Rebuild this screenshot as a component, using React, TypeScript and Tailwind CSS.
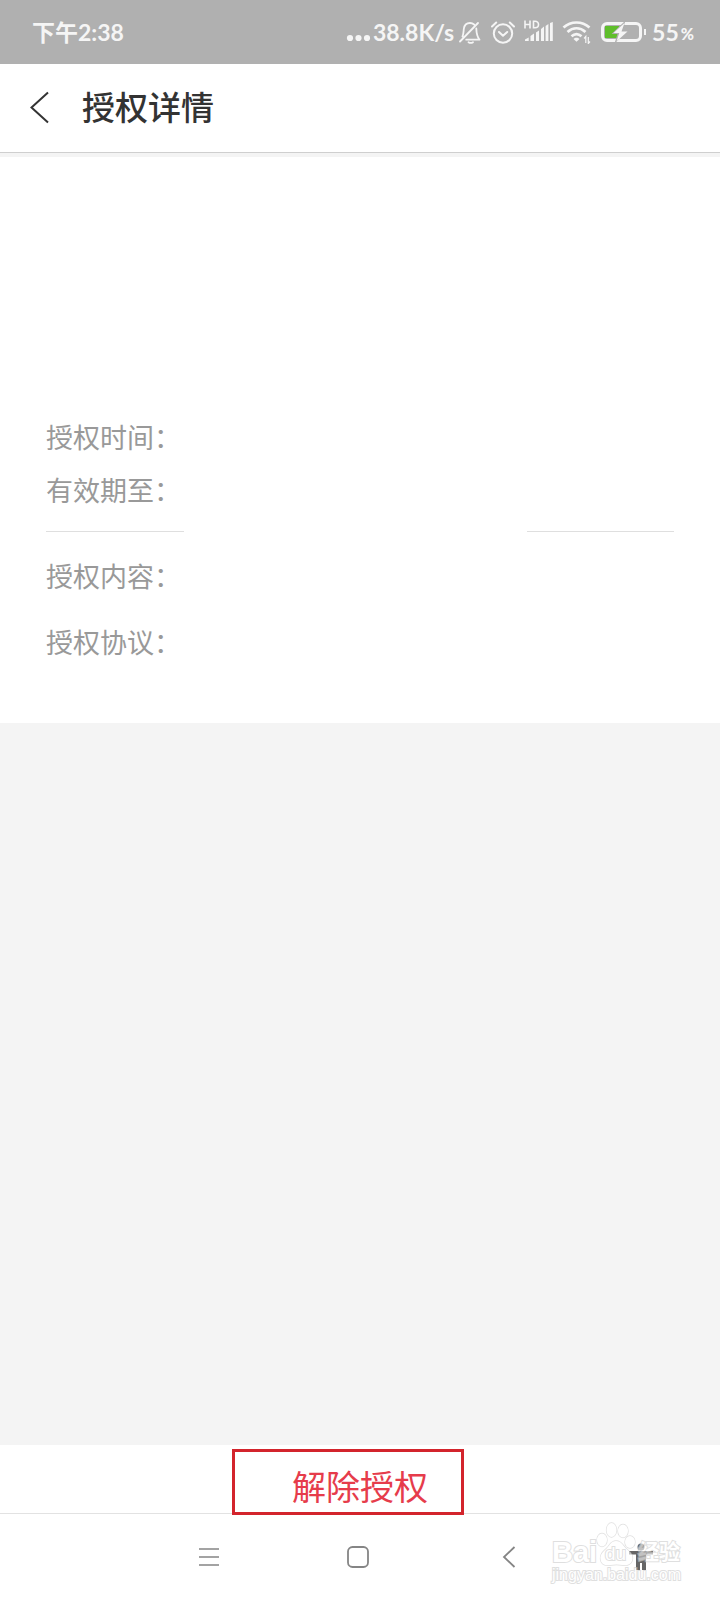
const latin = "font-[Lato,'Noto_Sans_CJK_SC',sans-serif]";

function StatusBar() {
  return (
    <header className={`flex h-16 items-center justify-between bg-[#b0b0b0] pl-8 pr-[26px] text-[23px] font-bold leading-8 text-[#f5f5f5] ${latin}`}>
      <time>下午2:38</time>
      <div className="flex items-center">
        <svg className="mr-0.5" width="25" height="24" viewBox="0 0 25 24" fill="#f5f5f5" aria-hidden="true">
          <circle cx="4" cy="18" r="3.1" /><circle cx="12.5" cy="18" r="3.1" /><circle cx="21" cy="18" r="3.1" />
        </svg>
        <span>38.8K/s</span>
        <svg className="ml-1" width="24" height="24" viewBox="0 0 24 24" fill="none" stroke="#f5f5f5" strokeWidth="1.8" strokeLinecap="round" strokeLinejoin="round" aria-label="静音">
          <path d="M2 21.5 20 3M4.500 16.500C5.500 14.500 5.500 12 5.800 9c.4-3.500 2.800-6 6.200-6 1.600 0 3 .6 4.100 1.500M18.300 8.500c.1 5 .4 7.500 3.200 11.200H8.200M10.500 22.200c1.500 1 3 1 4.500 0" />
        </svg>
        <svg className="ml-2" width="26" height="24" viewBox="0 0 26 24" fill="none" stroke="#f5f5f5" strokeWidth="2" strokeLinecap="round" strokeLinejoin="round" aria-label="闹钟">
          <circle cx="13" cy="13.500" r="9.200" /><path d="m9 12 4 3.700 4.200-3.700M2 6.500l4.200-4M24 6.500l-4.200-4" />
        </svg>
        <svg className="ml-2" width="29" height="24" viewBox="0 0 29 24" fill="#f5f5f5" aria-label="信号">
          <path d="M1 21v-1.500l3.700-2V21zM6.500 21v-5l3.500-2.500V21zM12 21v-8.500l3-2V21zM17 21V9l3-2.500V21zM21.600 21V6l2.800-2v17zM26 21V3l2.800-1v19z" />
          <path d="M1 .5v8M6 .5v8M1 4.500h5M9.500 1.200v6.600h1.500c4.700 0 4.700-6.600 0-6.600z" fill="none" stroke="#f5f5f5" strokeWidth="1.600" />
        </svg>
        <svg className="ml-2" width="31" height="24" viewBox="0 0 31 24" fill="none" stroke="#f5f5f5" aria-label="无线网络">
          <path d="M2.500 7.500c7.500-6.700 18.500-6.700 26 0M6.500 12c5.500-5 12.500-5 18 0M10.500 16.300c3.200-2.800 6.800-2.800 10 0" strokeWidth="2.700" />
          <path d="m15.500 21.800-3-2.700c1.500-1.800 4.500-1.800 6 0z" fill="#f5f5f5" stroke="none" />
          <path d="M24.800 23v-6.500l-1.700 2M27.300 17v6.500l1.700-2" strokeWidth="1.200" />
        </svg>
        <svg className="ml-2" width="48" height="24" viewBox="0 0 48 24" fill="none" aria-label="正在充电">
          <rect x="2.500" y="3.500" width="38" height="17" rx="4.500" stroke="#f5f5f5" strokeWidth="3" />
          <path d="M5 6h14v12H5z" fill="#5fbe2b" />
          <path d="M25.500.5 11.500 14h6l-3 9.500L29 10.500h-6.500z" fill="#b0b0b0" />
          <path d="M24.500 3 13.500 13h5.800l-2.800 8.500L27.500 11.500h-6z" fill="#f5f5f5" />
          <path d="M45 9v6" stroke="#f5f5f5" strokeWidth="2" />
        </svg>
        <span className="ml-1">55</span>
        <span className="ml-0.5 pt-1 text-[16px] font-black">%</span>
      </div>
    </header>
  );
}

function Field({ label, size }: { label: string; size: string }) {
  return (
    <div className={`flex items-center ${size}`}>
      <dt>{label}</dt>
      <dd />
    </div>
  );
}

function Watermark() {
  return (
    <div className="pointer-events-none absolute bottom-2 right-[38px] h-[80px] w-[130px] text-white opacity-60 [-webkit-text-stroke:2px_#cbcbcb] [paint-order:stroke] font-['Liberation_Sans','Noto_Sans_CJK_SC',sans-serif]">
      <svg className="absolute left-[44px] top-[9px]" width="42" height="46" viewBox="0 0 42 46" fill="#fff" stroke="#cbcbcb" strokeWidth="1.300" aria-hidden="true">
        <ellipse cx="6" cy="19" rx="5" ry="6.500" /><ellipse cx="15.500" cy="9" rx="5" ry="7" /><ellipse cx="27" cy="10" rx="5" ry="6.500" /><ellipse cx="34" cy="21" rx="5" ry="6" />
        <path d="M20 20c-5 0-6 4-9 7-4 4-7 6-6.500 11 .5 6 6 7 10 6 4-.7 8-.7 12 0 5 1 10-1 10-7 0-5-4-7-7-10-3-3-4-7-9.500-7z" />
      </svg>
      <span className="absolute left-0 top-[28px] text-[29px] font-bold leading-6">Bai</span>
      <span className="absolute left-[53px] top-[30px] text-[19px] leading-6">du</span>
      <span className="absolute left-[86px] top-[28px] text-[21px] font-bold leading-6">经验</span>
      <span className="absolute left-0 top-[55px] text-[16px] leading-4">jingyan.baidu.com</span>
    </div>
  );
}

export default function App() {
  return (
    <div className="relative flex min-h-screen flex-col bg-[#f4f4f4] font-['Noto_Sans_CJK_SC',sans-serif]">
      <StatusBar />
      <div className="flex h-[89px] items-center border-b border-[#cfcfcf] bg-white pl-7">
        <button type="button" aria-label="返回">
          <svg width="24" height="34" viewBox="0 0 24 34" fill="none" stroke="#333" strokeWidth="2">
            <path d="M20 1.500 3.500 16.500l16.500 15" />
          </svg>
        </button>
        <h1 className="ml-[30px] pb-1 text-[33px] font-medium leading-10 text-[#333]">授权详情</h1>
      </div>
      <main className="mt-1 bg-white px-[46px] pb-12 pt-[253px] text-[27px] leading-10 text-[#999]">
        <dl>
          <Field label="授权时间：" size="h-[53px]" />
          <Field label="有效期至：" size="h-[53px]" />
        </dl>
        <div className="mb-[11px] mt-[15px] flex justify-between" aria-hidden="true">
          <div className="h-px w-[22%] bg-[#dfdfdf]" />
          <div className="h-px w-[23.4%] bg-[#dfdfdf]" />
        </div>
        <dl>
          <Field label="授权内容：" size="h-[66px]" />
          <Field label="授权协议：" size="h-[66px]" />
        </dl>
      </main>
      <div className="flex-1" />
      <footer className="bg-white">
        <div className="relative flex h-[69px] flex-col border-b border-[#e2e2e2]">
          <button type="button" className="flex-1 pt-3.5 text-[34px] leading-10 text-[#e63c4b]">解除授权</button>
          <div className="pointer-events-none absolute -bottom-0.5 left-1/2 top-1 w-[232px] -translate-x-32 border-[3px] border-[#d3242c]" />
        </div>
        <nav className="grid h-[86px] grid-cols-[134fr_149fr_150fr_152fr_112fr_23fr] text-[#858585]">
          <button type="button" aria-label="菜单" className="col-start-2 flex items-center justify-center">
            <svg width="24" height="24" viewBox="0 0 24 24" fill="none" stroke="currentColor" strokeWidth="1.600"><path d="M2 4h20M2 12h20M2 20h20" /></svg>
          </button>
          <button type="button" aria-label="主页" className="flex items-center justify-center">
            <svg width="24" height="24" viewBox="0 0 24 24" fill="none" stroke="currentColor" strokeWidth="1.800"><rect x="2" y="2" width="20" height="20" rx="4.500" /></svg>
          </button>
          <button type="button" aria-label="后退" className="flex items-center justify-center">
            <svg width="24" height="24" viewBox="0 0 24 24" fill="none" stroke="currentColor" strokeWidth="1.800"><path d="M17.500 2 7 12l10.500 10" /></svg>
          </button>
          <button type="button" aria-label="无障碍" className="flex items-center justify-center text-[#666]">
            <svg width="28" height="28" viewBox="0 0 28 28" fill="currentColor"><circle cx="14" cy="4" r="3.500" /><path d="M2 8h24v3.500h-7V27h-4v-7h-2v7H9V11.500H2z" /></svg>
          </button>
        </nav>
      </footer>
      <Watermark />
    </div>
  );
}
